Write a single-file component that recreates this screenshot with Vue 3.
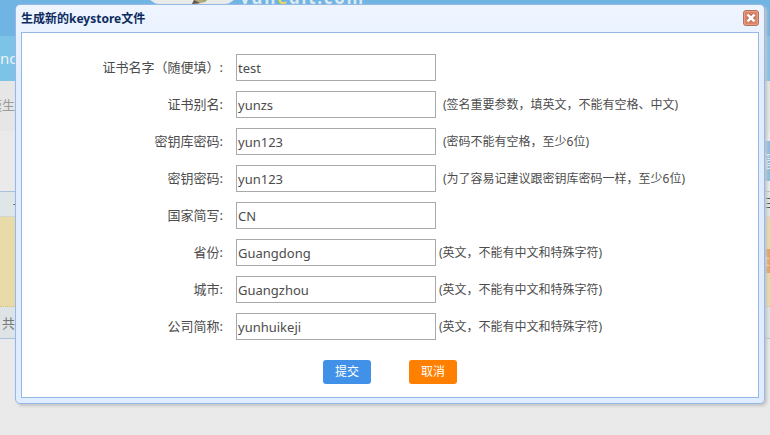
<script setup>
import { ref } from 'vue'

const fields = ref([
  { label: '证书名字（随便填）:', value: 'test', hint: '' },
  { label: '证书别名:', value: 'yunzs', hint: '(签名重要参数，填英文，不能有空格、中文)', gap: true },
  { label: '密钥库密码:', value: 'yun123', hint: '(密码不能有空格，至少6位)', gap: true },
  { label: '密钥密码:', value: 'yun123', hint: '(为了容易记建议跟密钥库密码一样，至少6位)', gap: true },
  { label: '国家简写:', value: 'CN', hint: '' },
  { label: '省份:', value: 'Guangdong', hint: '(英文，不能有中文和特殊字符)' },
  { label: '城市:', value: 'Guangzhou', hint: '(英文，不能有中文和特殊字符)' },
  { label: '公司简称:', value: 'yunhuikeji', hint: '(英文，不能有中文和特殊字符)' }
])
</script>

<template>
  <div class="screen">
    <div class="backdrop">
      <header class="banner">
        <svg class="mascot" width="84" height="5" viewBox="0 0 84 5">
          <path d="M0 0H84L81 2Q79 4 75 4H9Q5 4 3 2Z" fill="#e9eaea" />
          <path d="M44 0H57L55 2L47 4L42 4Z" fill="#b8aa7c" />
          <path d="M44 0L50 3L42 4Z" fill="#5b584f" />
          <path d="M53 0H57L54 2Z" fill="#8fae63" />
        </svg>
        <span class="domain">yun<i>e</i>dit.com</span>
      </header>
      <nav class="menu">nd</nav>
      <div class="crumb">速生</div>
      <div class="toolbar"><span class="tool">管</span></div>
      <div class="thead"><span>-</span><span class="thead-end">三</span></div>
      <div class="tbody"><span class="tag">the</span></div>
      <div class="tfoot">共</div>
    </div>

    <section class="dialog">
      <div class="titlebar">
        <h1>生成新的keystore文件</h1>
        <button class="close" type="button" aria-label="关闭">
          <svg width="16" height="16" viewBox="0 0 16 16">
            <rect x=".5" y=".5" width="15" height="15" rx="2.5" fill="#dd8468" stroke="#ae7560" />
            <rect x="1.5" y="1.5" width="13" height="13" rx="1.5" fill="none" stroke="#e99b80" />
            <path d="M5 5L11 11M11 5L5 11" stroke="#b96d56" stroke-width="4.6" />
            <path d="M4.6 4.6L11.4 11.4M11.4 4.6L4.6 11.4" stroke="#fff" stroke-width="2.7" />
          </svg>
        </button>
      </div>
      <form class="body" @submit.prevent>
        <div v-for="f in fields" :key="f.label" class="row">
          <label>{{ f.label }}</label>
          <input v-model="f.value" type="text" />
          <span class="hint" :class="{ spaced: f.gap }">{{ f.hint }}</span>
        </div>
        <div class="actions">
          <button type="submit" class="btn submit">提交</button>
          <button type="button" class="btn cancel">取消</button>
        </div>
      </form>
    </section>
  </div>
</template>

<style>
body {
  margin: 0;
  overflow: hidden;
}
</style>

<style scoped>
* {
  box-sizing: border-box;
}
.screen {
  position: relative;
  width: 770px;
  height: 435px;
  overflow: hidden;
  background: #eaeaea;
  font-family: "Noto Sans", "Noto Sans CJK SC", sans-serif;
  color: #4c4c4c;
}
.backdrop {
  display: flex;
  flex-direction: column;
  height: 435px;
}
.banner {
  display: flex;
  height: 36px;
  padding-left: 150px;
  background: #70b4e3;
}
.domain {
  margin: -12px 0 0 6px;
  font: bold 17px/20px "Open Sans", sans-serif;
  letter-spacing: 1.7px;
  color: #dceaf1;
}
.domain i {
  font-style: normal;
  color: #e5db56;
}
.menu {
  height: 45px;
  background: #7cc3e7;
  color: #edf3f5;
  font: 15px/45px "Noto Sans", sans-serif;
}
.crumb {
  height: 50px;
  padding-left: 0;
  margin-left: 0;
  text-indent: -11px;
  background: #e6e6e6;
  color: #9b9b9b;
  font-size: 13px;
  line-height: 49px;
}
.toolbar {
  display: flex;
  justify-content: flex-end;
  height: 60px;
  padding-top: 10px;
}
.tool {
  width: 8px;
  height: 40px;
  overflow: hidden;
  background: #86bfe2;
  color: #e8edf0;
  font-size: 18px;
  line-height: 40px;
}
.thead {
  display: flex;
  justify-content: space-between;
  height: 26px;
  padding-left: 13px;
  border-top: 1px solid #a8c1de;
  border-bottom: 1px solid #d2d6d3;
  background: #dee6e7;
  font-size: 12px;
  line-height: 24px;
}
.thead-end {
  width: 6px;
  overflow: hidden;
}
.tbody {
  display: flex;
  justify-content: flex-end;
  height: 90px;
  padding-top: 32px;
  border-bottom: 1px dotted #d2c18c;
  background: #e9dba7;
}
.tag {
  width: 6px;
  height: 24px;
  overflow: hidden;
  background: #e7a168;
  color: #f4dfce;
  font-size: 15px;
  line-height: 23px;
}
.tfoot {
  height: 32px;
  padding-left: 2px;
  border-bottom: 1px solid #a8c1de;
  background: #dee4e6;
  color: #777;
  font-size: 13px;
  line-height: 32px;
}
.dialog {
  position: absolute;
  top: 4px;
  left: 15px;
  display: flex;
  flex-direction: column;
  width: 750px;
  height: 400px;
  padding: 5px;
  border: 1px solid #95b8e7;
  border-radius: 5px;
  background: linear-gradient(to bottom, #eff5ff 0, #e0ecff 80px);
  box-shadow: 2px 2px 3px #c4c4c4;
}
.titlebar {
  display: flex;
  justify-content: space-between;
  height: 22px;
}
h1 {
  margin: 0;
  color: #0e2d5f;
  font-size: 12px;
  font-weight: bold;
  line-height: 17px;
}
.close {
  width: 16px;
  height: 16px;
  padding: 0;
  border: 0;
  background: none;
}
.close svg {
  display: block;
}
.body {
  flex: 1;
  padding-top: 21px;
  border: 1px solid #95b8e7;
  background: #fff;
}
.row {
  display: flex;
  height: 27px;
  margin-bottom: 10px;
  line-height: 27px;
}
label {
  width: 201px;
  margin-right: 13px;
  text-align: right;
  font-size: 13px;
  white-space: nowrap;
}
input {
  width: 200px;
  height: 27px;
  padding: 1px;
  border: 1px solid #a9a9a9;
  background: #fff;
  color: #4c4c4c;
  font: 13px "Noto Sans", "Noto Sans CJK SC", sans-serif;
}
.hint {
  margin-left: 3px;
  font-size: 12px;
  white-space: nowrap;
}
.spaced {
  margin-left: 7px;
}
.actions {
  display: flex;
  gap: 38px;
  padding: 10px 0 0 301px;
}
.btn {
  width: 48px;
  height: 24px;
  padding: 0;
  border: 0;
  border-radius: 3px;
  color: #fff;
  font: 12px/24px "Noto Sans", "Noto Sans CJK SC", sans-serif;
}
.submit {
  background: #4191e8;
}
.cancel {
  background: #ff8000;
}
</style>
